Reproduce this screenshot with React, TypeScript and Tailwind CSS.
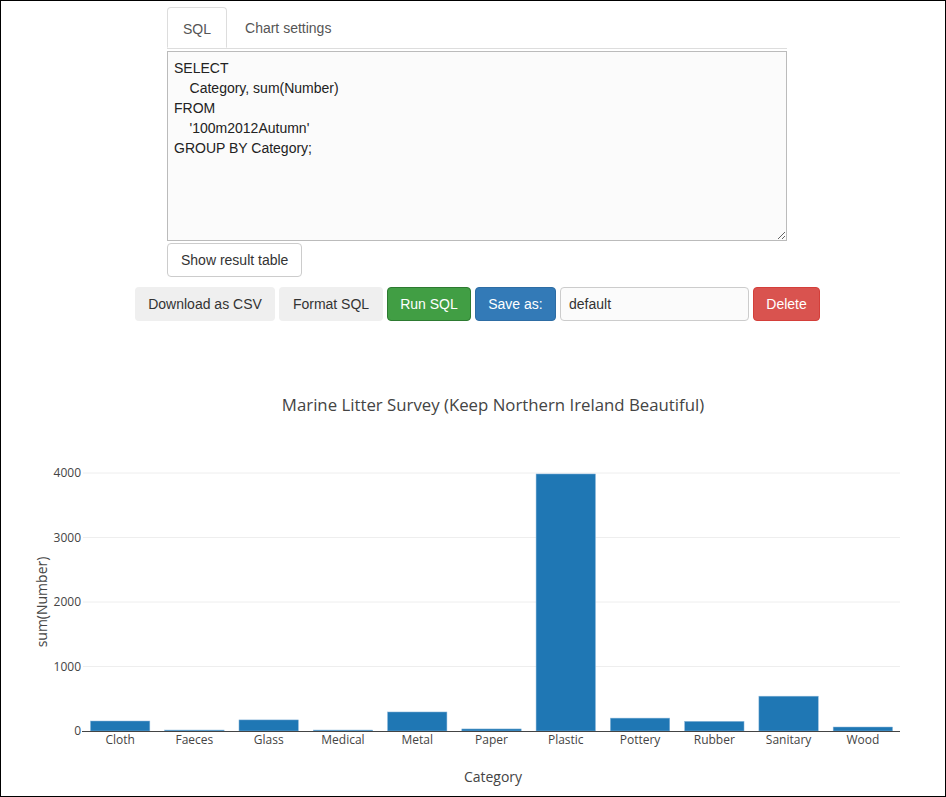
import React from "react";

const sql = `SELECT
    Category, sum(Number)
FROM
    '100m2012Autumn'
GROUP BY Category;`;

const data: { name: string; value: number }[] = [
  { name: "Cloth", value: 155 },
  { name: "Faeces", value: 15 },
  { name: "Glass", value: 172 },
  { name: "Medical", value: 15 },
  { name: "Metal", value: 295 },
  { name: "Paper", value: 32 },
  { name: "Plastic", value: 3985 },
  { name: "Pottery", value: 200 },
  { name: "Rubber", value: 150 },
  { name: "Sanitary", value: 540 },
  { name: "Wood", value: 62 },
];

function BarChart() {
  const left = 83;
  const right = 900;
  const base = 731;
  const scale = 0.0645;
  const step = (right - left) / data.length;
  const font = "'Open Sans', 'DejaVu Sans', sans-serif";

  return (
    <svg width="944" height="466" className="block">
      <g transform="translate(-1,-330)" fontFamily={font}>
        <text x="493" y="411" textAnchor="middle" fontSize="16.8" fill="#444">
          Marine Litter Survey (Keep Northern Ireland Beautiful)
        </text>

        {[1000, 2000, 3000, 4000].map((t) => (
          <line key={t} x1={left} x2={right} y1={base - t * scale} y2={base - t * scale} stroke="#eee" strokeWidth="1" />
        ))}
        {[0, 1000, 2000, 3000, 4000].map((t) => (
          <text key={t} x="81" y={base - t * scale + 4} textAnchor="end" fontSize="12" fill="#444">
            {t}
          </text>
        ))}

        {data.map((d, i) => {
          const cx = left + step * (i + 0.5);
          const w = step * 0.8;
          const h = d.value * scale;
          return (
            <g key={d.name}>
              <rect x={cx - w / 2} y={base - h} width={w} height={h} fill="#1f77b4" stroke="#8fb9dc" strokeWidth="0.5" />
              <text x={cx} y="744" textAnchor="middle" fontSize="12" fill="#444">
                {d.name}
              </text>
            </g>
          );
        })}

        <line x1={left - 1} x2={right} y1={base + 0.5} y2={base + 0.5} stroke="#444" strokeWidth="1" />

        <text x="493" y="782" textAnchor="middle" fontSize="14" fill="#444">
          Category
        </text>
        <text x="47" y="602" textAnchor="middle" fontSize="14" fill="#444" transform="rotate(-90 47 602)">
          sum(Number)
        </text>
      </g>
    </svg>
  );
}

export default function App() {
  return (
    <div
      className="w-[946px] h-[797px] border border-black bg-white text-[14px] text-[#333] overflow-hidden"
      style={{ fontFamily: "'Liberation Sans', Arial, sans-serif" }}
    >
      <div className="ml-[166px] w-[620px] pt-[6px]">
        <div className="flex border-b border-[#ddd]">
          <div className="h-[41px] -mb-px px-[15px] pt-[1px] leading-[40px] border border-[#ddd] border-b-white bg-white rounded-t-[4px] text-[#555]">
            SQL
          </div>
          <div className="h-[41px] pl-[18px] pr-[15px] pt-[1px] leading-[40px] text-[#555]">Chart settings</div>
        </div>
        <textarea
          readOnly
          defaultValue={sql}
          className="block mt-[2px] w-[620px] h-[190px] border border-[#bbb] bg-[#fbfbfb] px-[6px] py-[6px] text-[14px] leading-[20px] text-[#222] whitespace-pre outline-none"
          style={{ fontFamily: "'Liberation Sans', Arial, sans-serif" }}
        />
        <button className="mt-[2px] h-[34px] px-[13px] border border-[#ccc] rounded-[4px] bg-white text-[#333]">
          Show result table
        </button>
      </div>

      <div className="ml-[134px] mt-[10px] flex gap-[4px] h-[34px]">
        <button className="w-[140px] rounded-[4px] bg-[#efefef] text-[#333]">Download as CSV</button>
        <button className="w-[104px] rounded-[4px] bg-[#efefef] text-[#333]">Format SQL</button>
        <button className="w-[84px] rounded-[4px] bg-[#419e44] border border-[#2d7a31] text-white">Run SQL</button>
        <button className="w-[81px] rounded-[4px] bg-[#337ab7] border border-[#2e6da4] text-white">Save as:</button>
        <input
          readOnly
          defaultValue="default"
          className="w-[189px] rounded-[4px] border border-[#ccc] bg-[#fbfbfb] px-[8px] text-[#333] outline-none"
        />
        <button className="w-[67px] rounded-[4px] bg-[#d9534f] border border-[#d43f3a] text-white">Delete</button>
      </div>

      <div className="mt-[9px]">
        <BarChart />
      </div>
    </div>
  );
}
